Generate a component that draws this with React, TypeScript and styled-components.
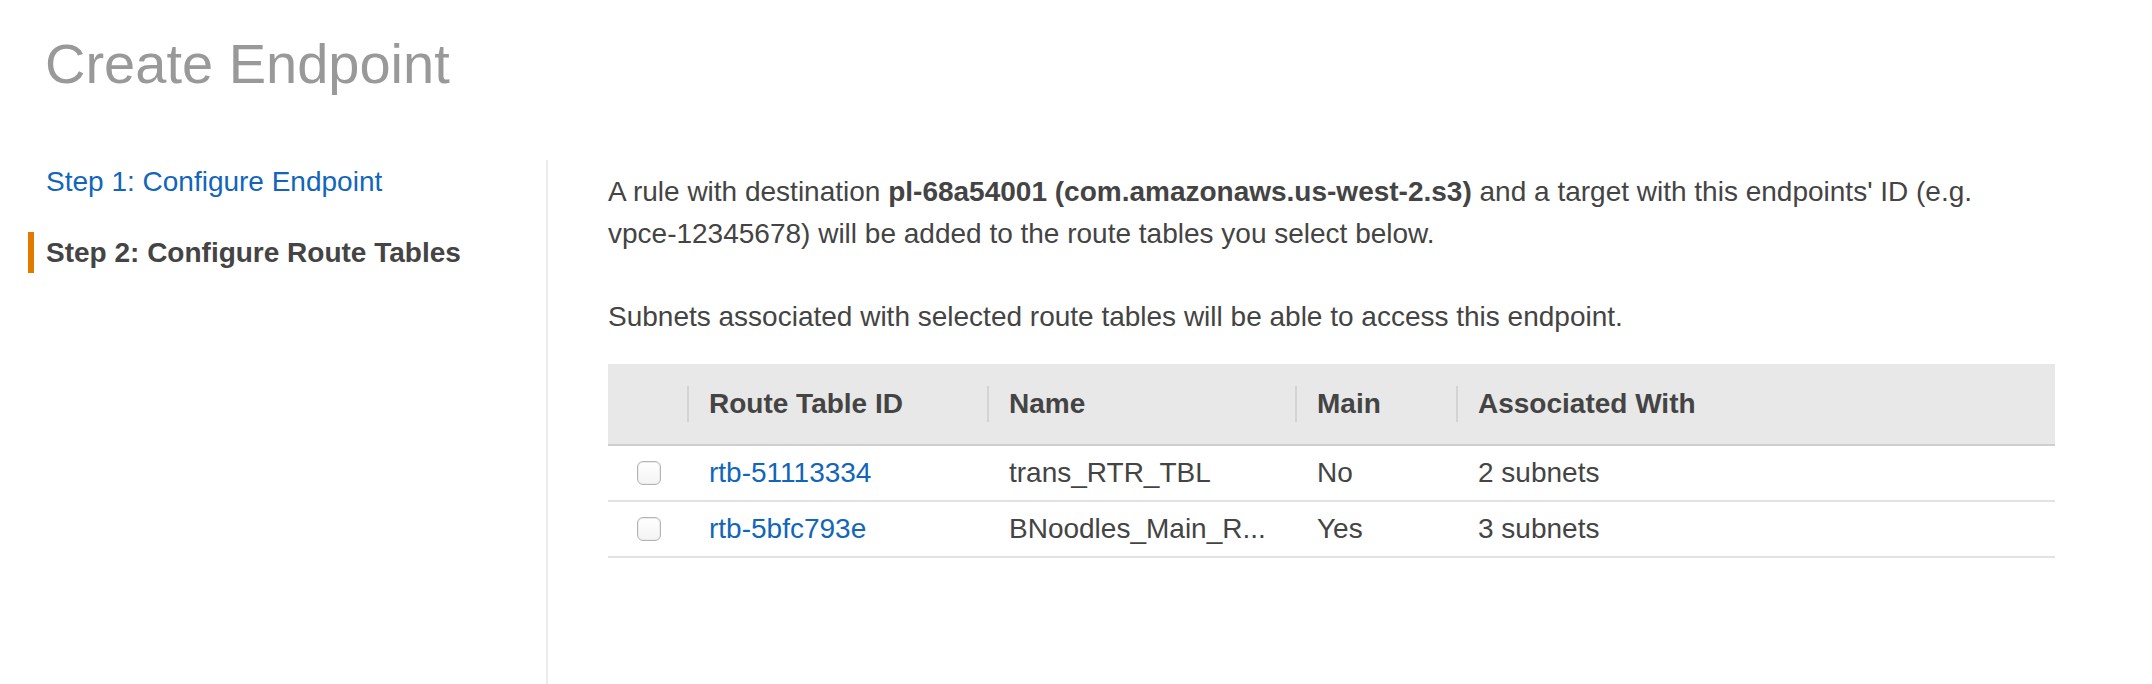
import React from "react";
import styled, { createGlobalStyle } from "styled-components";

const GlobalStyle = createGlobalStyle`
  *, *::before, *::after { box-sizing: border-box; }
  html, body { margin: 0; padding: 0; background: #fff; }
  body {
    font-family: "Liberation Sans", Arial, Helvetica, sans-serif;
    color: #444;
  }
`;

const Page = styled.div`
  width: 2152px;
  height: 684px;
  overflow: hidden;
  display: flex;
  flex-direction: column;
`;

const Title = styled.h1`
  margin: 32px 0 0 45px;
  font-size: 56px;
  line-height: 64px;
  font-weight: 400;
  color: #999;
`;

const Body = styled.div`
  display: flex;
  flex: 1;
  margin-top: 64px;
`;

const Sidebar = styled.nav`
  width: 548px;
  flex: none;
  border-right: 2px solid #ececec;
  padding: 1px 0 0 28px;
  display: flex;
  flex-direction: column;
  gap: 30px;
`;

const StepItem = styled.div<{ $active?: boolean }>`
  font-size: 28px;
  line-height: 41px;
  padding-left: 12px;
  border-left: 6px solid ${(p) => (p.$active ? "#e27a00" : "transparent")};
  font-weight: ${(p) => (p.$active ? 700 : 400)};
  color: ${(p) => (p.$active ? "#444" : "#1166bb")};
  white-space: nowrap;
`;

const Main = styled.main`
  flex: 1;
  padding: 11px 97px 0 60px;
`;

const Para = styled.p<{ $gap: number }>`
  margin: 0 0 ${(p) => p.$gap}px;
  font-size: 28px;
  line-height: 42px;
  color: #444;
`;

const Strong = styled.strong`
  font-weight: 700;
`;

const NoWrap = styled.span`
  white-space: nowrap;
`;

const Table = styled.table`
  width: 100%;
  border-collapse: separate;
  border-spacing: 0;
  table-layout: fixed;
  font-size: 28px;
`;

const HeadCell = styled.th<{ $sep?: boolean }>`
  position: relative;
  background: #e8e8e8;
  border-bottom: 2px solid #cfcfcf;
  padding: 24px 22px;
  line-height: 32px;
  text-align: left;
  font-weight: 700;
  color: #444;
  white-space: nowrap;

  &::before {
    content: "";
    display: ${(p) => (p.$sep ? "block" : "none")};
    position: absolute;
    left: 0;
    top: 22px;
    width: 2px;
    height: 36px;
    background: #d4d4d4;
  }
`;

const Cell = styled.td`
  padding: 11px 22px;
  line-height: 32px;
  border-bottom: 2px solid #e2e2e2;
  color: #444;
  white-space: nowrap;
  overflow: hidden;
  vertical-align: middle;
`;

const CheckCell = styled.td`
  padding: 0 0 0 29px;
  border-bottom: 2px solid #e2e2e2;
  vertical-align: middle;
`;

const Check = styled.span`
  display: block;
  width: 24px;
  height: 24px;
  border: 1px solid #b4b4b4;
  border-radius: 6px;
  background: linear-gradient(#ffffff, #f4f4f4);
  box-shadow: inset 0 0 0 1px #ececec;
`;

const Link = styled.a`
  color: #1166bb;
  text-decoration: none;
`;

const rows = [
  { id: "rtb-51113334", name: "trans_RTR_TBL", main: "No", assoc: "2 subnets" },
  { id: "rtb-5bfc793e", name: "BNoodles_Main_R...", main: "Yes", assoc: "3 subnets" },
];

export default function App() {
  return (
    <Page>
      <GlobalStyle />
      <Title>Create Endpoint</Title>
      <Body>
        <Sidebar>
          <StepItem>Step 1: Configure Endpoint</StepItem>
          <StepItem $active>Step 2: Configure Route Tables</StepItem>
        </Sidebar>
        <Main>
          <Para $gap={41}>
            A rule with destination <Strong>pl-68a54001 (com.amazonaws.us-west-2.s3)</Strong> and a
            target with this endpoints' ID (e.g. <NoWrap>vpce-12345678)</NoWrap> will be added to the
            route tables you select below.
          </Para>
          <Para $gap={26}>
            Subnets associated with selected route tables will be able to access this endpoint.
          </Para>
          <Table>
            <colgroup>
              <col style={{ width: 79 }} />
              <col style={{ width: 300 }} />
              <col style={{ width: 308 }} />
              <col style={{ width: 161 }} />
              <col />
            </colgroup>
            <thead>
              <tr>
                <HeadCell />
                <HeadCell $sep>Route Table ID</HeadCell>
                <HeadCell $sep>Name</HeadCell>
                <HeadCell $sep>Main</HeadCell>
                <HeadCell $sep>Associated With</HeadCell>
              </tr>
            </thead>
            <tbody>
              {rows.map((r) => (
                <tr key={r.id}>
                  <CheckCell>
                    <Check />
                  </CheckCell>
                  <Cell>
                    <Link>{r.id}</Link>
                  </Cell>
                  <Cell>{r.name}</Cell>
                  <Cell>{r.main}</Cell>
                  <Cell>{r.assoc}</Cell>
                </tr>
              ))}
            </tbody>
          </Table>
        </Main>
      </Body>
    </Page>
  );
}
